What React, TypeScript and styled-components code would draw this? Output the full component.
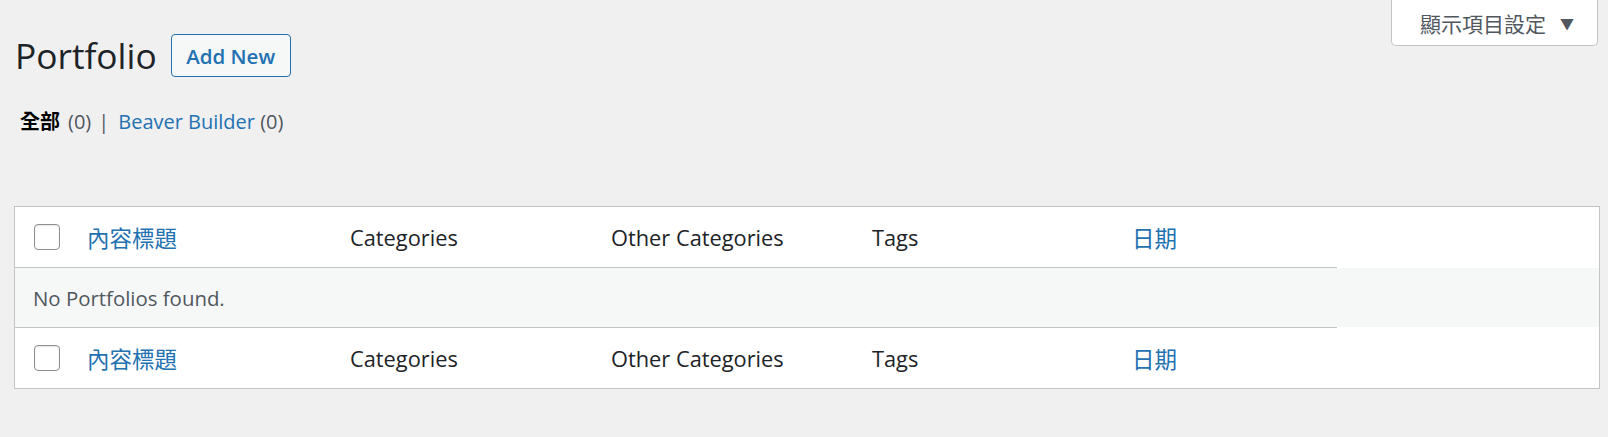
import React from "react";
import styled, { createGlobalStyle } from "styled-components";

const FONT = `"Open Sans", "Noto Sans CJK TC", sans-serif`;

const Global = createGlobalStyle`
  html, body { margin: 0; padding: 0; background: #f0f0f1; }
  body { font-family: ${FONT}; color: #3c434a; }
  * { box-sizing: border-box; }
`;

const Page = styled.div`
  width: 1608px;
  min-height: 437px;
  padding: 0 9px 0 14px;
`;

const TopArea = styled.div`
  display: flex;
  justify-content: space-between;
  align-items: flex-start;
`;

const TitleBlock = styled.div`
  display: flex;
  flex-direction: column;
  padding-top: 34px;
`;

const TitleRow = styled.div`
  display: flex;
  align-items: center;
  gap: 14px;
`;

const Title = styled.h1`
  margin: 0 0 0 1px;
  font-family: ${FONT};
  font-size: 35.3px;
  font-weight: 400;
  line-height: 43px;
  color: #1d2327;
`;

const AddButton = styled.a`
  display: inline-flex;
  align-items: center;
  justify-content: center;
  width: 120px;
  height: 43px;
  border: 1px solid #2271b1;
  border-radius: 4px;
  background: #f6f7f7;
  color: #2271b1;
  font-size: 20.5px;
  font-weight: 600;
  text-decoration: none;
`;

const Filters = styled.ul`
  display: flex;
  align-items: center;
  margin: 31px 0 0 6px;
  padding: 0;
  list-style: none;
  font-size: 20px;
  line-height: 28px;
`;

const FilterItem = styled.li<{ $current?: boolean }>`
  color: ${(p) => (p.$current ? "#000" : "#2271b1")};
  font-weight: ${(p) => (p.$current ? 600 : 400)};
`;

const Count = styled.span`
  color: #50575e;
  font-weight: 400;
`;

const Sep = styled.span`
  color: #50575e;
  margin: 0 9px 0 7px;
`;

const CjkBold = styled.span`
  font-size: 20px;
  margin-right: 8px;
`;

const ScreenOptions = styled.button`
  display: flex;
  align-items: center;
  gap: 14px;
  width: 207px;
  height: 46px;
  margin-right: 1px;
  padding: 0 26px 0 28px;
  background: #fff;
  border: 1px solid #c3c4c7;
  border-top: none;
  border-radius: 0 0 5px 5px;
  font-family: ${FONT};
  font-size: 21px;
  color: #50575e;
  white-space: nowrap;
`;

const Arrow = styled.span`
  font-size: 14px;
  color: #50575e;
`;

const Table = styled.div`
  margin-top: 70px;
  width: 1586px;
  background: #fff;
  border: 1px solid #c3c4c7;
  font-size: 21.8px;
`;

const HeadRow = styled.div<{ $foot?: boolean }>`
  display: flex;
  align-items: center;
  width: 1322px;
  height: 61px;
  ${(p) =>
    p.$foot
      ? "border-top: 1px solid #c3c4c7;"
      : "border-bottom: 1px solid #c3c4c7;"}
`;

const Cell = styled.div<{ $w: number }>`
  width: ${(p) => p.$w}px;
  flex: none;
  padding-left: 15px;
  color: #1d2327;
  white-space: nowrap;
`;

const CbCell = styled.div`
  width: 57px;
  flex: none;
  padding-left: 19px;
  display: flex;
  align-items: center;
`;

const Checkbox = styled.span`
  display: block;
  width: 26px;
  height: 26px;
  border: 1px solid #8c8f94;
  border-radius: 4px;
  background: #fff;
  box-shadow: inset 0 1px 2px rgba(0, 0, 0, 0.1);
`;

const SortLink = styled.a`
  color: #2271b1;
  text-decoration: none;
  font-size: 22.5px;
`;

const EmptyRow = styled.div`
  display: flex;
  align-items: center;
  height: 59px;
  padding-left: 18px;
  background: #f6f7f7;
  color: #50575e;
  font-size: 20.4px;
`;

const columns = [
  { key: "title", w: 263, label: "內容標題", link: true },
  { key: "cat", w: 261, label: "Categories" },
  { key: "other", w: 261, label: "Other Categories" },
  { key: "tags", w: 260, label: "Tags" },
  { key: "date", w: 220, label: "日期", link: true },
];

function Header({ foot }: { foot?: boolean }) {
  return (
    <HeadRow $foot={foot}>
      <CbCell>
        <Checkbox />
      </CbCell>
      {columns.map((c) => (
        <Cell key={c.key} $w={c.w}>
          {c.link ? <SortLink href="#">{c.label}</SortLink> : c.label}
        </Cell>
      ))}
    </HeadRow>
  );
}

export default function App() {
  return (
    <>
      <Global />
      <Page>
        <TopArea>
          <TitleBlock>
            <TitleRow>
              <Title>Portfolio</Title>
              <AddButton href="#">Add New</AddButton>
            </TitleRow>
            <Filters>
              <FilterItem $current>
                <CjkBold>全部</CjkBold>
                <Count>(0)</Count>
              </FilterItem>
              <Sep>|</Sep>
              <FilterItem>
                Beaver Builder <Count>(0)</Count>
              </FilterItem>
            </Filters>
          </TitleBlock>
          <ScreenOptions>
            顯示項目設定 <Arrow>▼</Arrow>
          </ScreenOptions>
        </TopArea>
        <Table>
          <Header />
          <EmptyRow>No Portfolios found.</EmptyRow>
          <Header foot />
        </Table>
      </Page>
    </>
  );
}
